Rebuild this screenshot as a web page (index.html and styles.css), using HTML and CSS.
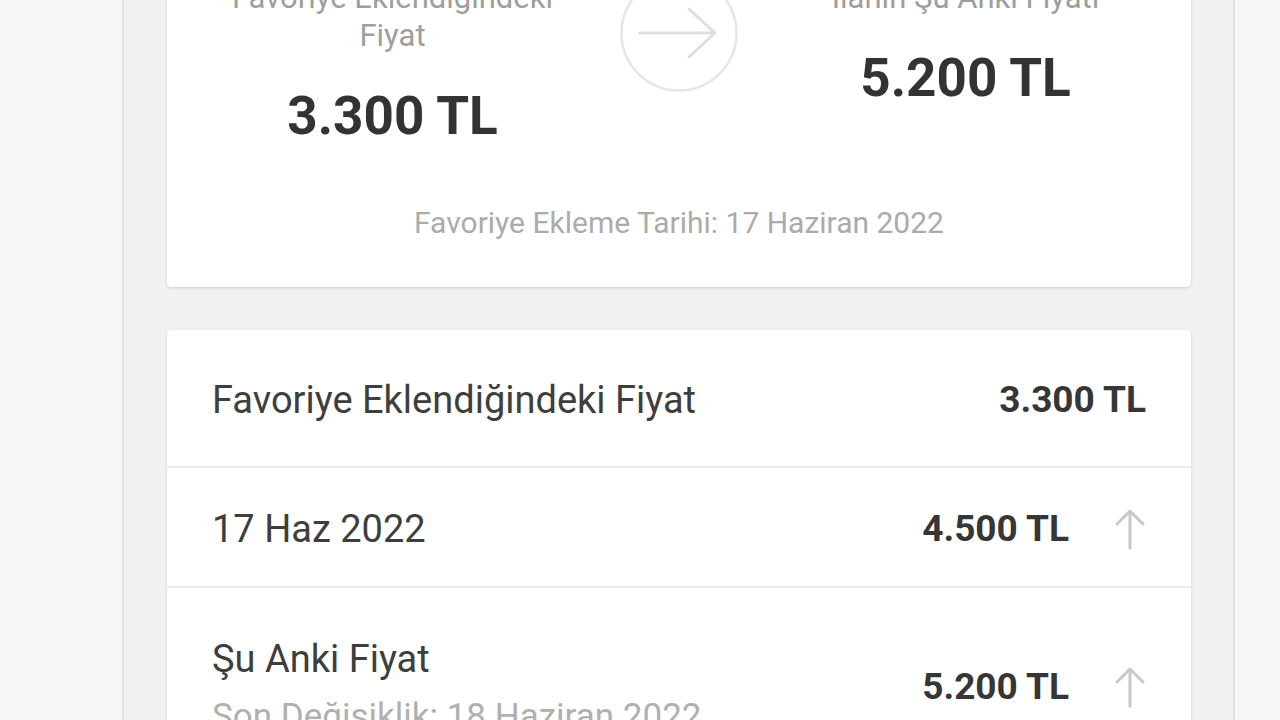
FILE: index.html
```html
<!DOCTYPE html>
<html lang="tr">
<head>
<meta charset="utf-8">
<title>Fiyat Geçmişi</title>
<link rel="stylesheet" href="styles.css">
</head>
<body>
<div class="page">
  <main class="panel">
    <section class="card summary">
      <div class="compare">
        <div class="col">
          <div class="col-label">Favoriye Eklendiğindeki<br>Fiyat</div>
          <div class="col-price">3.300 TL</div>
        </div>
        <div class="arrow-circle">
          <svg width="118" height="118" viewBox="0 0 118 118">
            <circle cx="59" cy="59" r="57.5" fill="none" stroke="#e6e6e6" stroke-width="2.5"/>
            <path d="M20 59 H95 M69 35 L95 59 L69 83" fill="none" stroke="#dedede" stroke-width="3" stroke-linecap="round" stroke-linejoin="round"/>
          </svg>
        </div>
        <div class="col">
          <div class="col-label">İlanın Şu Anki Fiyatı</div>
          <div class="col-price">5.200 TL</div>
        </div>
      </div>
      <div class="added-date">Favoriye Ekleme Tarihi: 17 Haziran 2022</div>
    </section>

    <section class="card history">
      <div class="row row-first">
        <div class="row-label">Favoriye Eklendiğindeki Fiyat</div>
        <div class="row-value">3.300 TL</div>
      </div>
      <div class="row row-mid">
        <div class="row-label">17 Haz 2022</div>
        <div class="row-right">
          <div class="row-value">4.500 TL</div>
          <svg class="up" width="32" height="42" viewBox="0 0 32 42">
            <path d="M16 3 V40 M3 16 L16 3 L29 16" fill="none" stroke="#c9c9c9" stroke-width="3" stroke-linecap="round" stroke-linejoin="round"/>
          </svg>
        </div>
      </div>
      <div class="row row-last">
        <div class="row-left">
          <div class="row-label">Şu Anki Fiyat</div>
          <div class="row-sub">Son Değişiklik: 18 Haziran 2022</div>
        </div>
        <div class="row-right">
          <div class="row-value">5.200 TL</div>
          <svg class="up" width="32" height="42" viewBox="0 0 32 42">
            <path d="M16 3 V40 M3 16 L16 3 L29 16" fill="none" stroke="#c9c9c9" stroke-width="3" stroke-linecap="round" stroke-linejoin="round"/>
          </svg>
        </div>
      </div>
    </section>
  </main>
</div>
</body>
</html>
```

FILE: styles.css
```css
*, *::before, *::after {
  box-sizing: border-box;
}
html, body {
  margin: 0;
  padding: 0;
  height: 100%;
  overflow: hidden;
}
body {
  background: #f7f7f7;
  font-family: Roboto, "Noto Sans", "Liberation Sans", sans-serif;
}
.page {
  display: flex;
  height: 720px;
  padding-left: 122px;
}
.panel {
  width: 1113px;
  border-left: 2px solid #e2e2e2;
  border-right: 2px solid #e2e2e2;
  background: #f1f1f1;
  padding: 0 42px 0 43px;
  display: flex;
  flex-direction: column;
}
.card {
  background: #ffffff;
  border-radius: 4px;
  box-shadow: 0 1px 3px rgba(0, 0, 0, 0.14);
}
.summary {
  margin-top: -64px;
  padding: 40px 45px 46px;
}
.compare {
  display: grid;
  grid-template-columns: 1fr 118px 1fr;
  column-gap: 47px;
  align-items: start;
}
.col {
  text-align: center;
}
.col-label {
  margin-top: 3px;
  font-size: 31px;
  line-height: 38px;
  color: #9e9e9e;
}
.col-price {
  margin-top: 29px;
  font-size: 53px;
  line-height: 64px;
  font-weight: 700;
  color: #333333;
}
.arrow-circle {
  margin-top: -2px;
  width: 118px;
  height: 118px;
}
.arrow-circle svg {
  display: block;
}
.added-date {
  margin-top: 57px;
  text-align: center;
  font-size: 30px;
  line-height: 36px;
  color: #ababab;
}
.history {
  margin-top: 43px;
  display: flex;
  flex-direction: column;
}
.row {
  display: flex;
  align-items: center;
  justify-content: space-between;
  padding: 38px 45px 36px;
  border-bottom: 2px solid #ececec;
}
.row-first {
  padding-top: 48px;
  padding-bottom: 44px;
}
.row-mid {
  padding-top: 39px;
  padding-bottom: 35px;
}
.row-last {
  padding-top: 49px;
  border-bottom: none;
}
.row-label {
  font-size: 38px;
  line-height: 44px;
  color: #3e3e3e;
}
.row-sub {
  margin-top: 16px;
  font-size: 35px;
  line-height: 40px;
  color: #b0b0b0;
}
.row-right {
  display: flex;
  align-items: center;
  gap: 45px;
}
.row-value {
  font-size: 37px;
  line-height: 44px;
  font-weight: 700;
  color: #363636;
}
.up {
  display: block;
}
```
